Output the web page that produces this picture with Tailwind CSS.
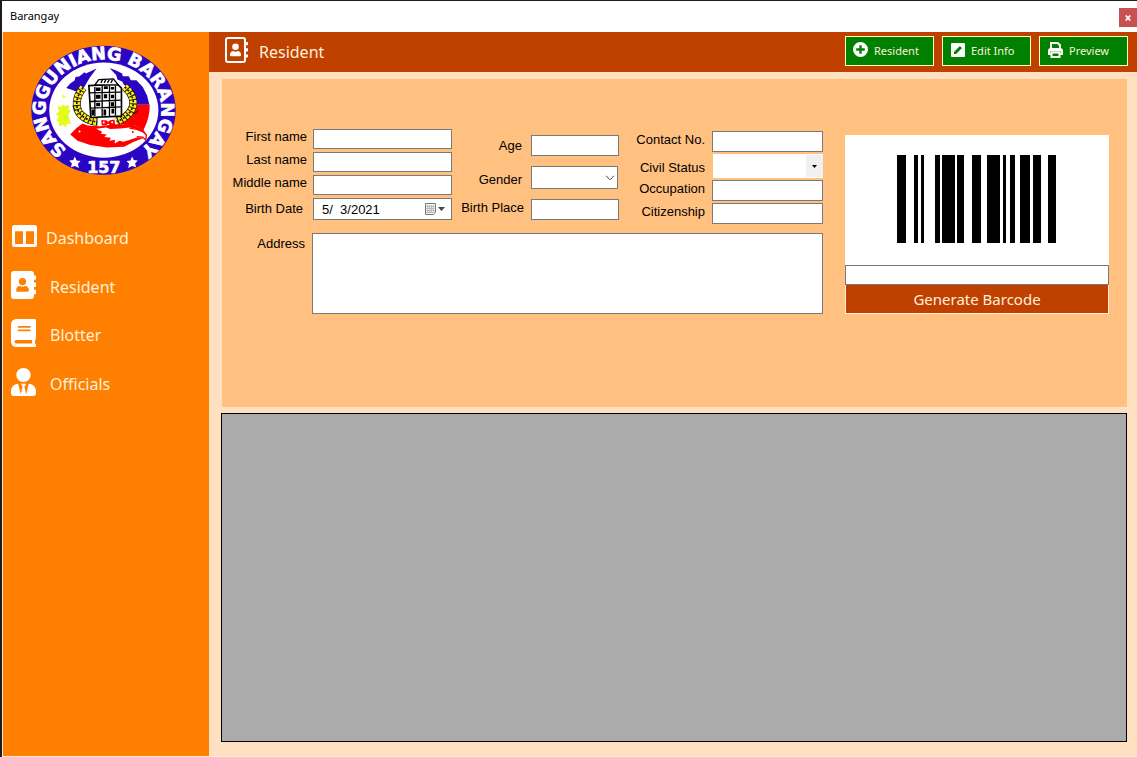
<!DOCTYPE html>
<html lang="en">
<head>
<meta charset="utf-8">
<title>Barangay</title>
<script src="https://cdn.jsdelivr.net/npm/@tailwindcss/browser@4"></script>
</head>
<body class="flex min-h-screen flex-col bg-[#1f1a1e] pt-px pl-[2px] font-['Noto_Sans',sans-serif]">
<header class="flex h-[31px] items-start justify-between bg-white pl-2">
  <h1 class="pt-[7px] text-[11px] leading-4 text-black">Barangay</h1>
  <button type="button" aria-label="Close" class="mt-[7px] flex h-[19px] w-[18px] items-center justify-center bg-[#c75050] text-white">
    <svg class="h-[6px] w-[6px]" viewBox="0 0 6 6" fill="none" stroke="currentColor" stroke-width="1.7"><path d="M.7.5 5.3 5.5M5.3.5.7 5.5"/></svg>
  </button>
</header>
<div class="flex flex-1 border-b border-l border-[#ffe9d6] bg-[#ffe0c0]">
  <aside class="w-[206px] shrink-0 bg-[#ff8000] pt-[13px]">
    <svg class="ml-7 h-[131px] w-[145px]" viewBox="92 137 436 392" role="img" aria-label="Sangguniang Barangay 157 seal">
      <defs>
        <path id="ring-top" d="M310 484A174 152 0 1 1 310.1 484"/>
      </defs>
      <ellipse cx="310" cy="332" rx="217" ry="194" fill="#2a06c4"/>
      <ellipse cx="311" cy="332" rx="164" ry="143" fill="#fff"/>
      <!-- flag wings -->
      <path fill="#2a06c4" d="M198 265 210 252 223 243 226 232 237 231 253 218 257 222 289 207 268 235 250 266 228 276 212 270Z"/>
      <path fill="#2a06c4" d="M328 205 348 213 366 222 368 230 386 230 392 242 409 242 428 262 441 288 448 316 412 316 404 290 388 264 372 256 366 246 352 240 348 226Z"/>
      <path fill="#f00" d="M408 316H449C449 345 442 370 430 392L405 378 352 374 392 342Z"/>
      <!-- sun -->
      <path fill="#e4fb1e" d="M183 285 196 290 191 297ZM172 320 184 322 188 314 196 320 206 316 205 330 212 334 204 346 208 358 212 374 201 372 197 384 188 376 176 382 176 368 168 362 176 352 167 344 176 337Z"/>
      <!-- eagle -->
      <path fill="#f00" d="M210 405 228 386 247 372 262 378 300 380 340 374 400 376 430 390 438 404 430 416 400 428 372 442 320 444 270 437 232 424Z"/>
      <path fill="#fff" d="M288 388 318 384 330 389 362 387 388 384 408 389 428 396 440 406 438 424 430 415 410 414 392 420 370 427 358 424 344 432 344 421 328 424 332 415 312 413 320 405 302 403 306 397Z"/>
      <path fill="none" stroke="#f00" stroke-width="4" d="M388 386 410 390 429 397 439 407 437 422 428 413 410 412"/>
      <circle cx="398" cy="398" r="3" fill="#f00"/><circle cx="238" cy="396" r="3" fill="#fff"/>
      <!-- wreath -->
      <g fill="none">
        <path stroke="#111" stroke-width="24" d="M249 264C226 292 224 324 240 344C252 356 270 366 292 367M374 262C404 290 406 318 388 340C378 352 366 360 350 366"/>
        <path stroke="#ffee1a" stroke-width="20" stroke-dasharray="9 3" d="M249 264C226 292 224 324 240 344C252 356 270 366 292 367M374 262C404 290 406 318 388 340C378 352 366 360 350 366"/>
        <path stroke="#111" stroke-width="5" stroke-dasharray="6 6" d="M249 264C226 292 224 324 240 344C252 356 270 366 292 367M374 262C404 290 406 318 388 340C378 352 366 360 350 366"/>
        <path stroke="#111" stroke-width="3" d="M218 320 226 334M400 344 418 332"/>
      </g>
      <!-- hall -->
      <path fill="#fff" stroke="#000" stroke-width="5" d="M266 258 352 254 364 266V350L272 354Z"/>
      <path fill="#fff" stroke="#000" stroke-width="4" d="M284 256 296 240 340 238 354 256Z"/>
      <path fill="none" stroke="#000" stroke-width="4" d="M302 250 307 241M312 250 317 241M322 250 327 241M332 250 337 241M268 280 362 278M270 306 362 302M272 326 362 322M284 262V350M306 258V350M328 258V350M346 258V348"/>
      <path fill="#000" d="M287 264h14v10h-14zM311 260h12v8h-12zM332 262h10v8h-10zM287 286h14v12h-14zM311 284h10v12h-10zM332 286h10v10h-10zM288 310h12v10h-12zM332 308h10v12h-10zM310 330h8v18h-8zM274 330h8v18h-8zM334 328h8v14h-8z"/>
      <!-- ribbon -->
      <path fill="#f00" d="M303 362 318 362 324 367 330 362 343 360 345 378 330 377 324 372 318 377 305 378Z"/>
      <circle cx="311" cy="369" r="3" fill="#fff"/><circle cx="336" cy="368" r="3" fill="#fff"/>
      <g fill="#fff" stroke="#fff" stroke-width="2" font-family="DejaVu Sans, sans-serif" font-weight="700" text-anchor="middle">
        <text font-size="53"><textPath href="#ring-top" startOffset="50%">SANGGUNIANG BARANGAY</textPath></text>
        <text x="311" y="521" font-size="48">157</text>
      </g>
      <path fill="#fff" d="M224 471 229 483 241 485 233 493 236 506 224 500 212 504 215 492 207 483 219 482ZM396 471 401 482 413 483 405 492 408 504 396 500 384 506 387 493 379 485 391 483Z"/>
    </svg>
    <nav class="mt-[35px] flex flex-col pl-2 text-base text-[#fff0dc]">
      <a href="#" class="flex h-[49px] items-center gap-[9px]">
        <svg class="ml-px h-[22px] w-[25px] text-white" viewBox="0 0 25 22" fill="currentColor" fill-rule="evenodd"><path d="M2.500 0H22.500a2.500 2.500 0 0 1 2.500 2.500V19.500a2.500 2.500 0 0 1-2.500 2.500H2.500a2.500 2.500 0 0 1-2.500-2.500V2.500a2.500 2.500 0 0 1 2.500-2.500ZM3 6.300V19H11V6.300ZM14 6.300V19H22V6.300Z"/></svg>
        <span class="pt-1">Dashboard</span>
      </a>
      <a href="#" class="flex h-[49px] items-center gap-[14px]">
        <svg class="h-7 w-[25px] text-white" viewBox="0 0 25 28" fill="currentColor" fill-rule="evenodd"><path d="M3 0H20a3 3 0 0 1 3 3V4.500H24.300a.7.7 0 0 1 .7.7V8a.7.7 0 0 1-.7.7H23V11.500H24.300a.7.7 0 0 1 .7.7V15.300a.7.7 0 0 1-.7.7H23V18.800H24.300a.7.7 0 0 1 .7.7V22.600a.7.7 0 0 1-.7.7H23V25a3 3 0 0 1-3 3H3a3 3 0 0 1-3-3V3a3 3 0 0 1 3-3ZM11.500 7a3.600 3.600 0 1 0 0 7.200a3.600 3.600 0 1 0 0-7.200ZM9 15C6.500 15 5.200 16.800 5.200 18.800V19.700Q5.200 20.700 6.500 20.700H16.500Q17.800 20.700 17.800 19.700V18.800C17.800 16.800 16.500 15 14 15Q11.500 16.300 9 15Z"/></svg>
        <span class="pt-1">Resident</span>
      </a>
      <a href="#" class="flex h-12 items-center gap-[14px]">
        <svg class="h-7 w-[25px] text-white" viewBox="0 0 25 28" fill="currentColor" fill-rule="evenodd"><path d="M5.200 0H23.500A1.500 1.500 0 0 1 25 1.500V19.200C25 19.900 24.500 20.300 24.200 20.600C23.900 21.700 23.900 23.600 24.200 24.700C24.700 25 25 25.500 25 26V26.700Q25 28 23.700 28H5.200A5.200 5.200 0 0 1 0 22.800V5.200A5.200 5.200 0 0 1 5.200 0ZM7 7V8.700H19.500V7ZM7 10.500V12.200H19.500V10.500ZM5.300 21A1.700 1.700 0 0 0 5.300 24.500H21.300Q20.900 22.800 21.300 21Z"/></svg>
        <span class="pt-1">Blotter</span>
      </a>
      <a href="#" class="flex h-[49px] items-center gap-[14px]">
        <svg class="h-7 w-[25px] text-white" viewBox="0 0 448 512" preserveAspectRatio="none" fill="currentColor"><path d="M224 256c70.700 0 128-57.300 128-128S294.700 0 224 0 96 57.300 96 128s57.300 128 128 128zm95.800 32.600L272 480l-32-136 32-56h-96l32 56-32 136-47.800-191.400C56.900 292 0 350.300 0 422.400V464c0 26.500 21.500 48 48 48h352c26.500 0 48-21.500 48-48v-41.600c0-72.100-56.900-130.400-128.200-133.800z"/></svg>
        <span class="pt-1">Officials</span>
      </a>
    </nav>
  </aside>
  <main class="flex min-w-0 flex-1 flex-col">
    <div class="flex h-10 items-center bg-[#c04000] pr-[9px] pb-[2px] pl-4 text-[#fff0dc]">
      <svg class="mb-[2px] h-[26px] w-[23px] text-white" viewBox="0 0 23 26" fill="currentColor"><path fill="none" stroke="currentColor" stroke-width="2" d="M3 1H18Q20 1 20 3V23Q20 25 18 25H3Q1 25 1 23V3Q1 1 3 1Z"/><path d="M20 5h2.200q.8 0 .8.800v2.400h-3zM20 11.300h3v3.200h-3zM20 17.500h3v2.300q0 .8-.8.800H20zM10.500 6.500a3.300 3.300 0 1 0 0 6.600a3.300 3.300 0 1 0 0-6.600ZM8 14C6 14.300 5 16 5 17.600V18.300Q5 19.200 6 19.200H15Q16 19.200 16 18.300V17.600C16 16 15 14.300 13 14Q10.500 15.500 8 14Z"/></svg>
      <h2 class="ml-[11px] flex-1 pt-[2px] text-base">Resident</h2>
      <div class="flex gap-2 text-[11px]">
        <button type="button" class="flex h-[30px] w-[89px] items-center gap-[6px] border border-[#ffffc0] bg-[#008000] pl-[7px]">
          <svg class="mb-[3px] h-[15px] w-[15px] text-white" viewBox="0 0 15 15" fill="currentColor" fill-rule="evenodd"><path d="M7.500 0a7.500 7.500 0 1 0 0 15a7.500 7.500 0 1 0 0-15ZM6.300 3.200H8.700V6.300H11.800V8.700H8.700V11.800H6.300V8.700H3.200V6.300H6.300Z"/></svg>
          Resident</button>
        <button type="button" class="flex h-[30px] w-[89px] items-center gap-[6px] border border-[#ffffc0] bg-[#008000] pl-2">
          <svg class="mb-[3px] h-[14px] w-[14px] text-white" viewBox="0 0 14 14"><rect width="14" height="14" rx="1" fill="currentColor"/><path fill="#008000" d="M3 11V8.900L8.900 3 11 5.100 5.100 11Z"/></svg>
          Edit Info</button>
        <button type="button" class="flex h-[30px] w-[89px] items-center gap-[6px] border border-[#ffffc0] bg-[#008000] pl-2">
          <svg class="mb-[3px] h-4 w-[15px] text-white" viewBox="0 0 15 16" fill="none" stroke="currentColor" stroke-width="2"><path d="M3 8V1H9.800L12 3.200V8M3 12H1V9Q1 7 3 7H12Q14 7 14 9V12H12M3.500 10.500H11.500V15H3.500Z"/><path d="M2 8.200H13" stroke-width="2.500"/></svg>
          Preview</button>
      </div>
    </div>
    <div class="flex flex-1 flex-col gap-[6px] pt-[7px] pr-[10px] pb-[14px] pl-3">
      <form class="ml-px flex min-h-[328px] items-start bg-[#ffc080] pr-[18px] pl-[7px] font-['Liberation_Sans',Arial,sans-serif] text-[13px] leading-4 text-black">
        <div class="pt-[50px]">
          <div class="flex items-start gap-2">
            <div class="grid w-[223px] grid-cols-[1fr_139px] items-center gap-x-[6px] gap-y-[3px] text-right whitespace-nowrap">
              <label for="first" class="pb-1">First name</label>
              <input id="first" type="text" class="h-5 w-full border border-[#7a7a7a] bg-white px-1">
              <label for="last" class="pb-1">Last name</label>
              <input id="last" type="text" class="h-5 w-full border border-[#7a7a7a] bg-white px-1">
              <label for="middle" class="pb-1">Middle name</label>
              <input id="middle" type="text" class="h-5 w-full border border-[#7a7a7a] bg-white px-1">
              <label for="birth" class="pr-1">Birth Date</label>
              <div class="flex h-[22px] items-center border border-[#7a7a7a] bg-white pr-[6px] pl-2">
                <input id="birth" type="text" value="5/  3/2021" class="w-0 flex-1 bg-transparent pt-[2px] outline-none">
                <button type="button" aria-label="Open calendar" class="flex items-center gap-px">
                  <svg class="h-3 w-3" viewBox="0 0 12 12"><path d="M.5.500H10.500V9L8.500 11.500H.5Z" fill="#f4f4f4" stroke="#777"/><path d="M2.500 2v8M4.500 2v8M6.500 2v8M8.500 2v7M1.500 3.500h8M1.500 5.500h8M1.500 7.500h8M1.500 9.500h7" stroke="#bbb" stroke-width="1"/></svg>
                  <svg class="h-1 w-[7px]" viewBox="0 0 7 4"><path d="M0 0H7L3.500 4Z" fill="#444"/></svg>
                </button>
              </div>
            </div>
            <div class="mt-[6px] grid w-[159px] grid-cols-[1fr_88px] items-center gap-x-[7px] gap-y-[10px] text-right whitespace-nowrap">
              <label for="age" class="pr-[2px]">Age</label>
              <input id="age" type="text" class="h-[21px] w-full border border-[#7a7a7a] bg-white px-1">
              <label for="gender" class="pt-1 pr-[2px]">Gender</label>
              <div class="relative">
                <select id="gender" class="block h-[23px] w-[87px] appearance-none border border-[#7a7a7a] bg-white px-1"><option></option><option>Male</option><option>Female</option></select>
                <svg class="pointer-events-none absolute top-[9px] right-1 h-[6px] w-[10px]" viewBox="0 0 10 6" fill="none" stroke="#444"><path d="M1 .8 5 4.800 9 .8"/></svg>
              </div>
              <label for="birthplace" class="pb-1">Birth Place</label>
              <input id="birthplace" type="text" class="h-[21px] w-full border border-[#7a7a7a] bg-white px-1">
            </div>
            <div class="mt-[2px] ml-[9px] grid w-[187px] grid-cols-[1fr_111px] items-center gap-x-[7px] gap-y-[2px] text-right whitespace-nowrap">
              <label for="contact" class="pb-1">Contact No.</label>
              <input id="contact" type="text" class="h-[21px] w-full border border-[#7a7a7a] bg-white px-1">
              <label for="civil" class="pt-1">Civil Status</label>
              <div class="relative pl-px">
                <select id="civil" class="block h-6 w-full appearance-none bg-white px-1"><option></option><option>Single</option><option>Married</option><option>Widowed</option></select>
                <span class="pointer-events-none absolute top-px right-0 flex h-[22px] w-[17px] items-center justify-center bg-[#f0f0f0]"><svg class="h-[3px] w-[5px]" viewBox="0 0 5 3"><path d="M0 0H5L2.500 3Z"/></svg></span>
              </div>
              <label for="occupation" class="pb-1">Occupation</label>
              <input id="occupation" type="text" class="h-[21px] w-full border border-[#7a7a7a] bg-white px-1">
              <label for="citizenship" class="pb-1">Citizenship</label>
              <input id="citizenship" type="text" class="h-[21px] w-full border border-[#7a7a7a] bg-white px-1">
            </div>
          </div>
          <div class="mt-[9px] flex gap-[7px]">
            <label for="address" class="w-[76px] pt-[3px] text-right">Address</label>
            <textarea id="address" class="block h-[81px] flex-1 resize-none border border-[#7a7a7a] bg-white p-1"></textarea>
          </div>
        </div>
        <div class="mt-14 ml-[22px] flex flex-1 flex-col font-['Noto_Sans',sans-serif]">
          <div class="flex h-[130px] items-start justify-center bg-white pt-5 pr-[2px]">
            <svg class="h-[89px] w-[159px]" viewBox="0 0 159 89" preserveAspectRatio="none" role="img" aria-label="Barcode"><path d="M0 0h9v88H0zM17 0h4v88h-4zM24 0h3v88h-3zM38 0h5v88h-5zM45 0h13v88H45zM60 0h7v88h-7zM75 0h9v88h-9zM90 0h13v88H90zM106 0h3v88h-3zM113 0h5v88h-5zM123 0h10v88h-10zM136 0h8v88h-8zM151 0h8v88h-8z"/></svg>
          </div>
          <input type="text" aria-label="Barcode value" class="h-5 w-full border border-[#7a7a7a] bg-white px-1 text-[13px]">
          <button type="button" class="h-[29px] border border-t-0 border-[#fff0dc] bg-[#c04000] text-[15px] text-[#fff0dc]">Generate Barcode</button>
        </div>
      </form>
      <section aria-label="Resident records" class="flex-1 border border-black bg-[#ababab]"></section>
    </div>
  </main>
</div>
</body>
</html>
